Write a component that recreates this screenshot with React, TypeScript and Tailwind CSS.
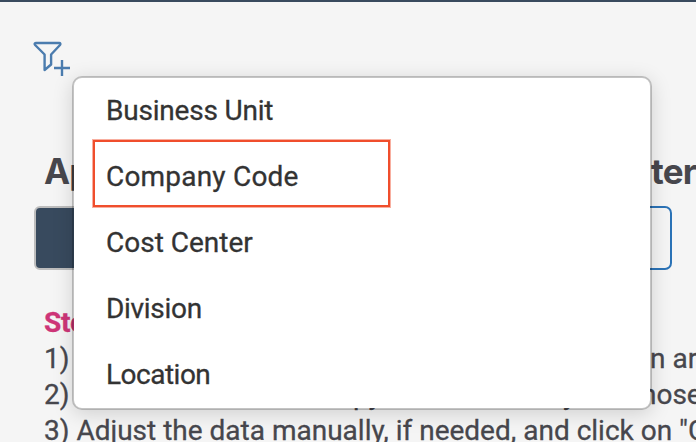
const options: { label: string; spacing: string }[] = [
  { label: 'Business Unit', spacing: 'tracking-[-0.2px]' },
  { label: 'Company Code', spacing: 'tracking-[0.2px]' },
  { label: 'Cost Center', spacing: 'tracking-[0px]' },
  { label: 'Division', spacing: 'tracking-[-0.3px]' },
  { label: 'Location', spacing: 'tracking-[-0.5px]' },
];

function FilterIcon() {
  return (
    <svg className="block h-[38px] w-[40px]" viewBox="0 0 40 38" fill="none" stroke="#4b7cae" strokeWidth="2.4" strokeLinejoin="round">
      <path d="M3.8 3h23.4c1.3 0 1.5 1.1.8 2L19.1 14.5V24.5L12.6 30V14.5L3.1 5c-.8-.9-.6-2 .7-2Z" />
      <path d="M30 20v16M22 28h16" />
    </svg>
  );
}

function FilterMenu() {
  return (
    <ul className="absolute top-[74px] left-[72px] h-[334px] w-[580px] rounded-[10px] border-2 border-black/20 bg-white bg-clip-padding shadow-[0_4px_20px_rgba(0,0,0,0.15)]">
      {options.map((o) => (
        <li key={o.label} className="flex h-[66px] items-center pl-8 text-[28px] leading-8 text-[#333333] [-webkit-text-stroke:0.3px_#333333]">
          <span className={o.spacing}>{o.label}</span>
        </li>
      ))}
      <li className="absolute top-[62px] left-[19px] h-[67px] w-[297px] border-2 border-[#f04e2c] shadow-[0_0_0_1px_rgba(240,78,44,0.45)]" />
    </ul>
  );
}

export default function App() {
  return (
    <main className="relative h-[442px] w-[696px] overflow-hidden border-t-2 border-[#394a5e] bg-[#f5f5f5] font-['Roboto','Liberation_Sans',sans-serif] text-[#47474d]">
      <div className="pt-[38px] pl-8">
        <FilterIcon />
      </div>
      <h1 className="mt-[73px] flex h-10 items-center pl-11 font-['Inter',sans-serif] text-[35px] font-bold tracking-[-0.8px] whitespace-nowrap">
        <span className="w-[607px] shrink-0">Ap</span>
        <span>ter</span>
      </h1>
      <div className="mt-[15px] ml-[34px] flex h-16 w-[638px]">
        <div className="w-1/2 rounded-l-[6px] border-2 border-[#bdbdbd] bg-[#384a5e]" />
        <div className="w-1/2 rounded-r-[7px] border-2 border-l-0 border-[#2b73b7]" />
      </div>
      <section className="mt-[35px] pl-11 text-[28px] leading-9 whitespace-nowrap [-webkit-text-stroke:0.3px]">
        <h2 className="font-bold tracking-[-0.3px] text-[#ce3578]">Step</h2>
        <p className="flex">
          <span className="w-[606px] shrink-0">1)</span>
          <span>n ar</span>
        </p>
        <p className="flex">
          <span className="w-[309px] shrink-0">2)</span>
          <span className="w-[210px] shrink-0">py</span>
          <span className="w-[78px] shrink-0">y</span>
          <span>hose</span>
        </p>
        <p>3) Adjust the data manually, if needed, and click on "G</p>
      </section>
      <FilterMenu />
    </main>
  );
}
